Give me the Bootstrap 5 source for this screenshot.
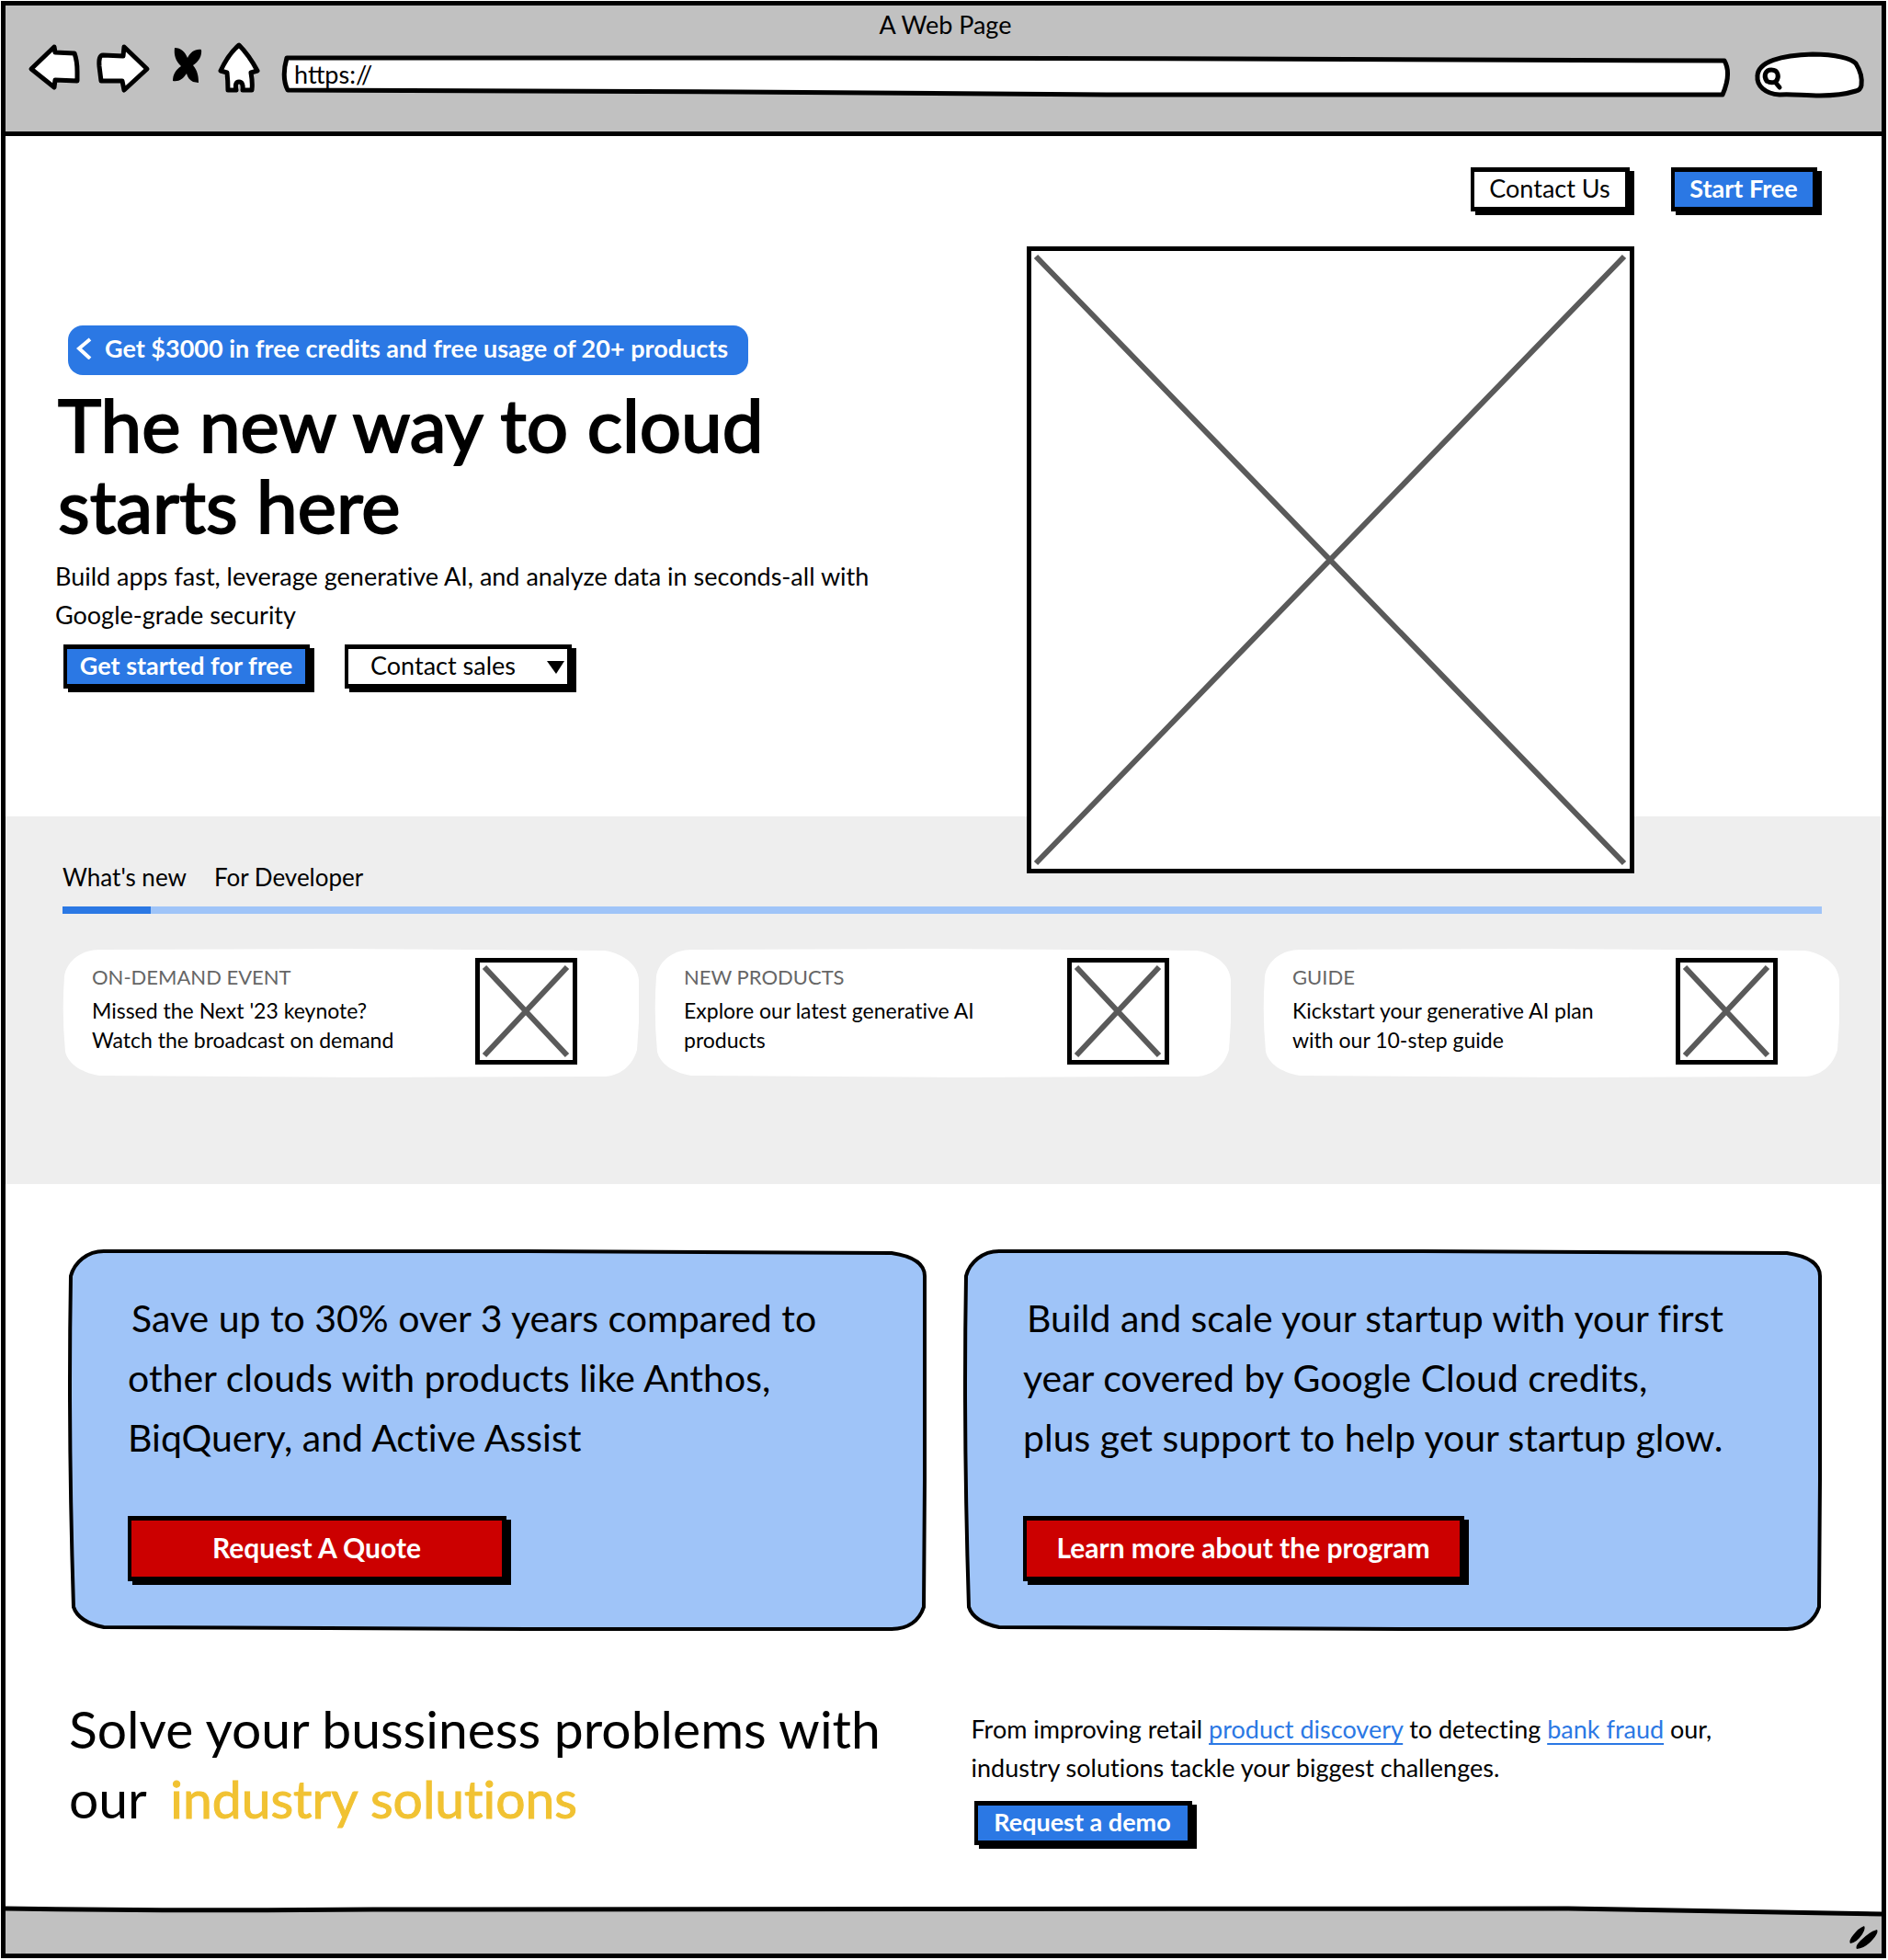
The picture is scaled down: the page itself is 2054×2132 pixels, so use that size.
<!DOCTYPE html>
<html lang="en">
<head>
<meta charset="utf-8">
<meta name="viewport" content="width=device-width, initial-scale=1">
<title>A Web Page</title>
<link href="https://cdn.jsdelivr.net/npm/bootstrap@5.3.0/dist/css/bootstrap.min.css" rel="stylesheet">
<style>
  :root { --ink:#000; --blue:#2b78e4; --sky:#9fc4f8; --chrome:#c1c1c1; --red:#cc0000; --gold:#f1c232; }
  body { font-family: Lato, "Open Sans", sans-serif; font-variant-ligatures:none; color: var(--ink); background:#fff; font-size:27px; line-height:42px; }
  p, h1, h2, h3 { margin:0; font-weight:400; }
  .browser { margin:1px 2px 2px 1px; border:5px solid var(--ink); min-height:calc(100vh - 3px); }
  .chrome { background:var(--chrome); border-bottom:5px solid var(--ink); padding:6px 14px 35px 18px; }
  .chrome-title { line-height:30px; margin-bottom:4px; }
  .tool { border:0; background:none; padding:0; line-height:0; }
  .sketch { position:absolute; inset:0; width:100%; height:100%; overflow:visible; }
  .sketch path, .xbox path { vector-effect:non-scaling-stroke; }
  .field { position:relative; height:62px; }
  .field input { position:relative; width:100%; height:100%; border:0; background:none; outline:0; color:var(--ink); }
  .address { margin-left:4px; margin-right:23px; }
  .address input { padding:10px 16px 4px; }
  .finder { width:127px; }
  .finder input { padding:8px 16px 4px 40px; }

  .btn-sketch { border:5px solid var(--ink); border-left-width:4px; border-radius:0; box-shadow:5px 4px 0 var(--ink);
    height:48px; padding:0 8px 2px; font-size:27px; line-height:36px; color:var(--ink); background:#fff; white-space:nowrap; }
  .btn-sketch:hover { color:var(--ink); background:#fff; border-color:var(--ink); }
  .btn-fill, .btn-fill:hover { background:var(--blue); color:#fff; font-weight:700; }
  .btn-alert, .btn-alert:hover { background:var(--red); color:#fff; font-weight:700; }
  .btn-tall { height:71px; font-size:30px; line-height:59px; }
  .w-contact { width:173px; } .w-free { width:159px; } .w-start { width:268px; }
  .w-demo { width:237px; margin-left:3px; } .w-quote { width:412px; } .w-learn { width:480px; }
  .sales { position:relative; width:247px; display:flex; }
  .sales select { appearance:none; width:100%; padding-left:24px; text-align:left; }
  .sales svg { position:absolute; right:8px; top:18px; pointer-events:none; }

  .hero { display:grid; grid-template-columns:1111fr 930fr; }
  .hero-top { padding:34px 70px 38px; gap:45px; }
  .hero-copy { padding:86px 20px 0 54px; }
  .promo { background:var(--blue); color:#fff; font-weight:700; border-radius:16px; height:54px; margin:0 0 9px 14px; padding:0 20px 4px 9px; gap:14px; white-space:nowrap; text-decoration:none; width:740px; }
  .promo:hover { color:#fff; }
  .hero h1 { font-size:80px; line-height:88px; padding-left:3px; -webkit-text-stroke:2px var(--ink); }
  .hero-copy p { margin:13px 0 11px; }
  .hero-copy .acts { padding-left:9px; gap:38px; }
  .xbox { display:block; background:#fff; border:5px solid var(--ink); }
  .hero-pic { position:relative; width:661px; height:682px; max-width:92%; margin-bottom:-62px; }

  .news { background:#eee; padding:50px 46px 116px 62px; }
  .news .tabs { line-height:32px; gap:30px; font-size:26px; }
  .news .tabs a { color:var(--ink); text-decoration:none; }
  .news .progress { height:8px; border-radius:0; background:var(--sky); margin:16px 19px 38px 0; }
  .news .progress-bar { background:var(--blue); }
  .story { position:relative; flex:1 1 0; height:140px; }
  .story + .story { margin-left:17px; }
  .story:last-child { margin-left:35px; }
  .story-in { position:relative; padding:10px 67px 0 32px; }
  .story h3 { font-size:22px; line-height:32px; color:#666; margin:5px 0 4px; }
  .story p { font-size:23px; line-height:32px; }
  .story .xbox { width:111px; height:116px; flex:none; }

  .offers { display:grid; grid-template-columns:1fr 1fr; gap:41px; padding:71px 65px 0 69px; }
  .offer { position:relative; height:415px; }
  .offer-in { position:relative; padding:42px 20px 0 64px; }
  .offer p { font-size:41px; line-height:65px; margin-bottom:53px; text-indent:4px; white-space:nowrap; }

  .solve { display:grid; grid-template-columns:981fr 925fr; padding:68px 65px 66px 69px; }
  .solve h2 { font-size:57px; line-height:76px; white-space:nowrap; }
  .solve em { font-style:normal; color:var(--gold); -webkit-text-stroke:1px var(--gold); margin-left:12px; }
  .solve p { margin:18px 0 15px; }
  .solve p a { color:var(--blue); text-decoration-thickness:2px; text-underline-offset:5px; }
  .statusbar { position:relative; height:51px; }
  .grip { position:absolute; right:0; bottom:0; }
</style>
</head>
<body>
<div class="browser d-flex flex-column">

  <header class="chrome">
    <div class="chrome-title text-center">A Web Page</div>
    <div class="d-flex">
      <button class="tool" type="button" aria-label="Back"><svg width="72" height="62" viewBox="24 46 72 62"><path d="M59 51 L34 75 L59 95 L60 87 L84 88 L84 78 Q84 66 81 58 L60 57 Z" fill="#fff" stroke="#000" stroke-width="5" stroke-linejoin="round"/></svg></button>
      <button class="tool" type="button" aria-label="Forward"><svg width="76" height="62" viewBox="96 46 76 62"><path d="M135 51 L160 75 L135 98 L133 88 L110 88 L108 72 Q107 60 112 60 L134 61 Z" fill="#fff" stroke="#000" stroke-width="5" stroke-linejoin="round"/></svg></button>
      <button class="tool" type="button" aria-label="Stop"><svg width="60" height="62" viewBox="172 46 60 62"><path d="M190 52 C197 52 201 56 204 63 C207 57 212 53 219 54 C220 61 216 67 210 71 C215 77 216 83 216 90 L210 89 C206 87 204 84 203 80 C199 86 195 89 188 88 C188 81 191 76 197 72 C191 66 189 60 190 52 Z"/></svg></button>
      <button class="tool" type="button" aria-label="Home"><svg width="68" height="62" viewBox="232 46 68 62"><path d="M260 49 Q271 60 280 77 L273 79 Q275 90 274 98 L264 98 Q265 89 260 89 Q255 89 257 98 L248 98 Q248 88 247 79 L240 77 Q249 58 260 49 Z" fill="#fff" stroke="#000" stroke-width="5" stroke-linejoin="round"/></svg></button>
      <div class="field address flex-grow-1">
        <svg class="sketch" viewBox="0 0 1579 62" preserveAspectRatio="none" aria-hidden="true"><path d="M8 17 L600 17 L1040 18 L1572 20 Q1580 34 1570 57 L900 57 L500 54 L9 52 Q2 38 8 17 Z" fill="#fff" stroke="#000" stroke-width="5" stroke-linejoin="round"/></svg>
        <input type="text" value="https://" aria-label="Address">
      </div>
      <div class="field finder">
        <svg class="sketch" viewBox="1906 46 127 62" preserveAspectRatio="none" aria-hidden="true"><path d="M1912 83 C1912 67 1938 60 1972 59 C1998 59 2014 64 2019 69 C2024 77 2026 86 2025 93 Q2024 98 2019 99 C2006 103 1994 104 1980 104 C1962 104 1950 102 1936 103 C1920 102 1911 93 1912 83 Z" fill="#fff" stroke="#000" stroke-width="5"/><path d="M1922 88 C1918 82 1921 76 1927 76 C1935 76 1936 84 1932 89 C1929 90 1925 90 1922 88 M1931 89 L1936 95" fill="none" stroke="#000" stroke-width="5" stroke-linecap="round"/></svg>
        <input type="search" aria-label="Search">
      </div>
    </div>
  </header>

  <main class="flex-grow-1">
    <nav class="hero-top d-flex justify-content-end">
      <button class="btn btn-sketch w-contact" type="button">Contact Us</button>
      <button class="btn btn-sketch btn-fill w-free" type="button">Start Free</button>
    </nav>
    <section class="hero">
      <div class="hero-copy">
        <a class="promo d-flex align-items-center" href="#"><svg width="17" height="24" viewBox="0 0 17 24" aria-hidden="true"><path d="M15 2 L3 12 L15 23" fill="none" stroke="#fff" stroke-width="4"/></svg>Get $3000 in free credits and free usage of 20+ products</a>
        <h1>The new way to cloud<br>starts here</h1>
        <p>Build apps fast, leverage generative AI, and analyze data in seconds-all with<br>Google-grade security</p>
        <div class="acts d-flex">
          <button class="btn btn-sketch btn-fill w-start" type="button">Get started for free</button>
          <div class="sales">
            <select class="btn btn-sketch" aria-label="Contact sales"><option>Contact sales</option></select>
            <svg width="19" height="14" viewBox="0 0 19 14" aria-hidden="true"><path d="M0 0 H19 L10 14 Z"/></svg>
          </div>
        </div>
      </div>
      <svg class="xbox hero-pic" viewBox="0 0 651 672" preserveAspectRatio="none" role="img" aria-label="Image placeholder"><path d="M5 6 L645 666 M645 6 L5 666" fill="none" stroke="#5a5a5a" stroke-width="6"/></svg>
    </section>

    <section class="news">
      <nav class="tabs d-flex"><a href="#">What's new</a><a href="#">For Developer</a></nav>
      <div class="progress" role="progressbar" aria-label="Stories" aria-valuenow="5" aria-valuemin="0" aria-valuemax="100"><div class="progress-bar" style="width:5%"></div></div>
      <div class="d-flex">
        <article class="story">
          <svg class="sketch" viewBox="0 0 627 140" preserveAspectRatio="none" aria-hidden="true"><path d="M40 1 L300 0 L590 2 C612 6 626 18 627 34 L627 80 L625 110 C620 128 606 138 590 139 L330 140 L40 138 C18 134 6 124 3 112 Q-1 70 2 30 C5 12 22 1 40 1 Z" fill="#fff"/></svg>
          <div class="story-in d-flex justify-content-between">
            <div><h3>ON-DEMAND EVENT</h3><p>Missed the Next '23 keynote?<br>Watch the broadcast on demand</p></div>
            <svg class="xbox" viewBox="0 0 101 106" preserveAspectRatio="none" role="img" aria-label="Image placeholder"><path d="M5 5 L95 101 M95 5 L5 101" fill="none" stroke="#5a5a5a" stroke-width="6"/></svg>
          </div>
        </article>
        <article class="story">
          <svg class="sketch" viewBox="0 0 627 140" preserveAspectRatio="none" aria-hidden="true"><path d="M40 1 L300 0 L590 2 C612 6 626 18 627 34 L627 80 L625 110 C620 128 606 138 590 139 L330 140 L40 138 C18 134 6 124 3 112 Q-1 70 2 30 C5 12 22 1 40 1 Z" fill="#fff"/></svg>
          <div class="story-in d-flex justify-content-between">
            <div><h3>NEW PRODUCTS</h3><p>Explore our latest generative AI<br>products</p></div>
            <svg class="xbox" viewBox="0 0 101 106" preserveAspectRatio="none" role="img" aria-label="Image placeholder"><path d="M5 5 L95 101 M95 5 L5 101" fill="none" stroke="#5a5a5a" stroke-width="6"/></svg>
          </div>
        </article>
        <article class="story">
          <svg class="sketch" viewBox="0 0 627 140" preserveAspectRatio="none" aria-hidden="true"><path d="M40 1 L300 0 L590 2 C612 6 626 18 627 34 L627 80 L625 110 C620 128 606 138 590 139 L330 140 L40 138 C18 134 6 124 3 112 Q-1 70 2 30 C5 12 22 1 40 1 Z" fill="#fff"/></svg>
          <div class="story-in d-flex justify-content-between">
            <div><h3>GUIDE</h3><p>Kickstart your generative AI plan<br>with our 10-step guide</p></div>
            <svg class="xbox" viewBox="0 0 101 106" preserveAspectRatio="none" role="img" aria-label="Image placeholder"><path d="M5 5 L95 101 M95 5 L5 101" fill="none" stroke="#5a5a5a" stroke-width="6"/></svg>
          </div>
        </article>
      </div>
    </section>

    <section class="offers">
      <article class="offer">
        <svg class="sketch" viewBox="0 0 934 415" preserveAspectRatio="none" aria-hidden="true"><path d="M2 29 C6 14 20 2 38 2 L500 2 L896 4 C916 7 932 14 932 29 L932 250 L931 389 C926 404 914 413 896 413 L500 413 L38 411 C18 407 8 398 5 389 Q-1 200 2 29 Z" fill="#9fc4f8" stroke="#000" stroke-width="4"/></svg>
        <div class="offer-in">
          <p>Save up to 30% over 3 years compared to<br>other clouds with products like Anthos,<br>BiqQuery, and Active Assist</p>
          <button class="btn btn-sketch btn-alert btn-tall w-quote" type="button">Request A Quote</button>
        </div>
      </article>
      <article class="offer">
        <svg class="sketch" viewBox="0 0 934 415" preserveAspectRatio="none" aria-hidden="true"><path d="M2 29 C6 14 20 2 38 2 L500 2 L896 4 C916 7 932 14 932 29 L932 250 L931 389 C926 404 914 413 896 413 L500 413 L38 411 C18 407 8 398 5 389 Q-1 200 2 29 Z" fill="#9fc4f8" stroke="#000" stroke-width="4"/></svg>
        <div class="offer-in">
          <p>Build and scale your startup with your first<br>year covered by Google Cloud credits,<br>plus get support to help your startup glow.</p>
          <button class="btn btn-sketch btn-alert btn-tall w-learn" type="button">Learn more about the program</button>
        </div>
      </article>
    </section>

    <section class="solve">
      <h2>Solve your bussiness problems with<br>our <em>industry solutions</em></h2>
      <div>
        <p>From improving retail <a href="#">product discovery</a> to detecting <a href="#">bank fraud</a> our,<br>industry solutions tackle your biggest challenges.</p>
        <button class="btn btn-sketch btn-fill w-demo" type="button">Request a demo</button>
      </div>
    </section>
  </main>

  <footer class="statusbar">
    <svg class="sketch" viewBox="0 0 2041 51" preserveAspectRatio="none" aria-hidden="true"><path d="M0 3 L1700 2 L2041 8 V51 H0 Z" fill="#c1c1c1"/><path d="M0 2 Q180 5 400 3 L1700 2 L2041 8" fill="none" stroke="#000" stroke-width="5"/></svg>
    <svg class="grip" width="40" height="36" viewBox="2007 2089 40 36" aria-hidden="true"><path d="M2028 2095 Q2030 2098 2026 2104 Q2020 2113 2013 2114 Q2011 2111 2016 2105 Q2022 2097 2028 2095 Z M2042 2099 Q2044 2102 2038 2109 Q2030 2119 2020 2120 Q2018 2117 2024 2111 Q2034 2101 2042 2099 Z"/></svg>
  </footer>
</div>
<script src="https://cdn.jsdelivr.net/npm/bootstrap@5.3.0/dist/js/bootstrap.bundle.min.js"></script>
</body>
</html>
